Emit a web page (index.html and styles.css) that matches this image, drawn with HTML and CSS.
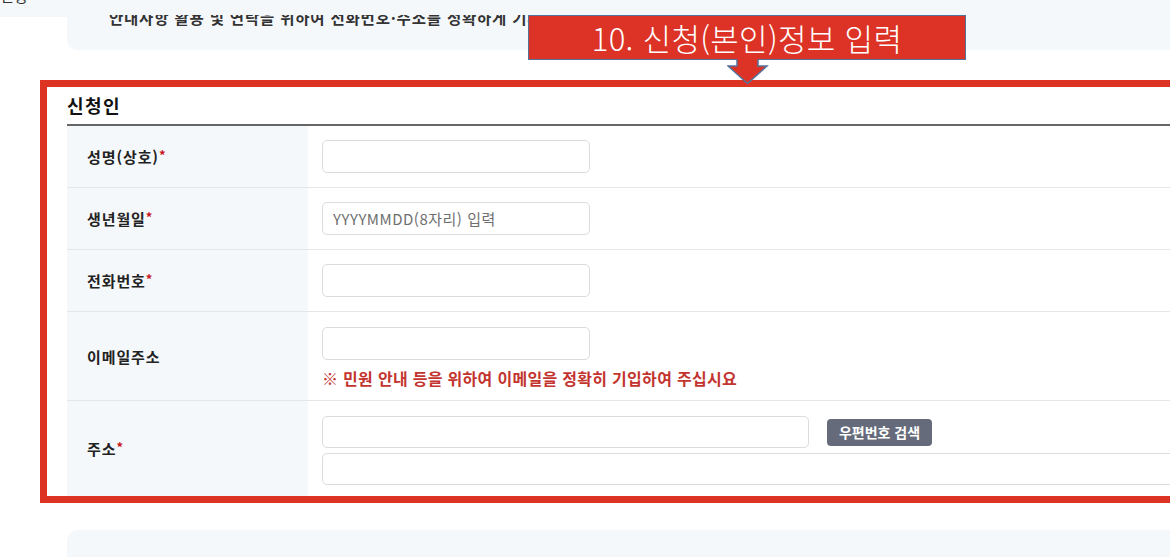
FILE: index.html
```html
<!DOCTYPE html>
<html lang="ko">
<head>
<meta charset="utf-8">
<title>신청인 정보 입력</title>
<link rel="stylesheet" href="styles.css">
</head>
<body>
<div class="page">
  <div class="top">
    <div class="side"><div class="side-text">신청</div></div>
    <div class="notice">
      <div class="notice-clip"><div class="notice-text">안내사항 활용 및 연락을 위하여 전화번호·주소를 정확하게 기재하여 주시기 바랍니다.</div></div>
    </div>
  </div>

  <div class="frame">
    <h2 class="heading">신청인</h2>
    <div class="table">
      <div class="row">
        <div class="label">성명(상호)<span class="req">*</span></div>
        <div class="value"><input class="field" type="text"></div>
      </div>
      <div class="row">
        <div class="label">생년월일<span class="req">*</span></div>
        <div class="value"><input class="field" type="text" placeholder="YYYYMMDD(8자리) 입력"></div>
      </div>
      <div class="row">
        <div class="label">전화번호<span class="req">*</span></div>
        <div class="value"><input class="field" type="text"></div>
      </div>
      <div class="row row-email">
        <div class="label">이메일주소</div>
        <div class="value">
          <input class="field" type="text">
          <p class="note">※ 민원 안내 등을 위하여 이메일을 정확히 기입하여 주십시요</p>
        </div>
      </div>
      <div class="row row-addr">
        <div class="label">주소<span class="req">*</span></div>
        <div class="value">
          <div class="addr-line">
            <input class="field field-zip" type="text">
            <button class="btn" type="button">우편번호 검색</button>
          </div>
          <input class="field field-full" type="text">
        </div>
      </div>
    </div>
  </div>

  <div class="bottom-box"></div>

  <div class="callout">10. 신청(본인)정보 입력</div>
  <svg class="arrow" width="44" height="30" viewBox="0 0 44 30">
    <polygon points="10,0 31,0 31,8 40,8 20.5,25.5 1,8 10,8" fill="#dc3326"/>
    <polyline points="10,1.5 10,8 1,8 20.5,25.5 40,8 31,8 31,1.5" fill="none" stroke="#54739a" stroke-width="1.5"/>
  </svg>
</div>
</body>
</html>
```

FILE: styles.css
```css
html, body {
  margin: 0;
  padding: 0;
  overflow: hidden;
  background: #ffffff;
}
body {
  width: 1170px;
  height: 557px;
  font-family: "Noto Sans CJK KR", "Noto Sans", sans-serif;
  color: #222;
}
.page {
  position: relative;
  width: 1170px;
  height: 557px;
  overflow: hidden;
}
.top {
  display: flex;
  align-items: flex-start;
}
.side {
  width: 67px;
  height: 17px;
  background: #f5f8fb;
  overflow: hidden;
}
.side-text {
  margin-top: -13px;
  font-size: 15px;
  line-height: 18px;
  color: #333;
}
.notice {
  flex: 1;
  height: 50px;
  background: #f5f8fb;
  border-bottom-left-radius: 10px;
  padding-left: 42px;
  box-sizing: border-box;
}
.notice-clip {
  margin-top: 15px;
  height: 12px;
  width: 419px;
  overflow: hidden;
}
.notice-text {
  margin-top: -8px;
  font-size: 15.5px;
  line-height: 20px;
  font-weight: 700;
  color: #333;
  white-space: nowrap;
  letter-spacing: 0.8px;
}
.frame {
  margin-top: 30px;
  margin-left: 40px;
  width: 1200px;
  box-sizing: border-box;
  border: 7px solid #dd3323;
  padding: 6px 0 0 20px;
  background: #fff;
}
.heading {
  margin: 0;
  font-size: 18px;
  line-height: 24px;
  font-weight: 700;
  color: #111;
  padding-bottom: 7px;
  border-bottom: 2px solid #666;
  letter-spacing: 1.5px;
}
.table {
  display: flex;
  flex-direction: column;
}
.row {
  display: flex;
  border-bottom: 1px solid #e6e6e6;
}
.row:last-child {
  border-bottom: none;
}
.label {
  width: 241px;
  flex: none;
  background: #f5f8fb;
  padding-left: 20px;
  box-sizing: border-box;
  display: flex;
  align-items: center;
  font-size: 15px;
  font-weight: 700;
  color: #222;
  letter-spacing: 0.9px;
}
.req {
  color: #c8161d;
  margin-left: 0;
  font-size: 13px;
  position: relative;
  top: -2px;
}
.value {
  flex: 1;
  padding: 14px 0 14px 14px;
  display: flex;
  flex-direction: column;
  align-items: flex-start;
}
.field {
  width: 268px;
  height: 33px;
  box-sizing: border-box;
  border: 1px solid #dcdcdc;
  border-radius: 5px;
  background: #fff;
  padding: 0 10px;
  font-family: "Noto Sans CJK KR", "Noto Sans", sans-serif;
  font-size: 15px;
  color: #333;
  margin: 0;
}
.field::placeholder {
  color: #6f6f6f;
  letter-spacing: 0.5px;
}
.row-email .value {
  padding-top: 15px;
  padding-bottom: 12px;
}
.note {
  margin: 8px 0 0 0;
  font-size: 16px;
  line-height: 20px;
  font-weight: 700;
  color: #c3342f;
  letter-spacing: 0.3px;
}
.row-addr .value {
  padding-top: 15px;
  padding-bottom: 11px;
  gap: 5px;
}
.addr-line {
  display: flex;
  align-items: center;
}
.field-zip {
  width: 487px;
  height: 32px;
}
.btn {
  margin-left: 18px;
  width: 105px;
  height: 27px;
  border: none;
  border-radius: 4px;
  background: #656b7a;
  color: #fff;
  font-family: "Noto Sans CJK KR", "Noto Sans", sans-serif;
  font-size: 14px;
  font-weight: 700;
  padding: 0;
  letter-spacing: 0px;
}
.field-full {
  width: 900px;
  height: 32px;
}
.bottom-box {
  margin-top: 27px;
  margin-left: 67px;
  height: 60px;
  background: #f5f8fb;
  border-radius: 10px 0 0 10px;
}
.callout {
  position: absolute;
  left: 528px;
  top: 15px;
  width: 438px;
  height: 45px;
  box-sizing: border-box;
  background: #dc3326;
  border: 1.5px solid #54739a;
  color: #fff;
  font-size: 31px;
  line-height: 44px;
  text-align: center;
  font-weight: 300;
  letter-spacing: 0.3px;
}
.arrow {
  position: absolute;
  left: 727px;
  top: 58px;
}
```
